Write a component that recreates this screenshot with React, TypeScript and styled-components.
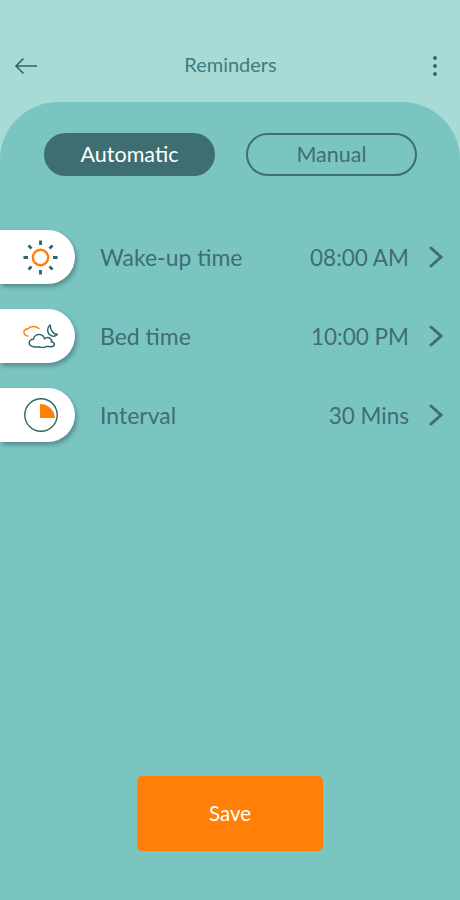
import React from "react";
import styled, { createGlobalStyle } from "styled-components";

const Global = createGlobalStyle`
  html, body { margin: 0; padding: 0; }
  body { font-family: Lato, "Open Sans", sans-serif; background: #a7dbd6; }
`;

const Page = styled.div`
  width: 460px;
  height: 900px;
  overflow: hidden;
  display: flex;
  flex-direction: column;
  background: #a7dbd6;
`;

const Header = styled.header`
  height: 102px;
  flex: none;
  padding: 0 22px 0 14px;
  box-sizing: border-box;
  display: grid;
  grid-template-columns: 40px 1fr 40px;
  align-items: start;
`;

const IconSlot = styled.div<{ $end?: boolean }>`
  height: 30px;
  margin-top: 51px;
  display: flex;
  align-items: center;
  justify-content: ${(p) => (p.$end ? "flex-end" : "flex-start")};
`;

const Title = styled.h1`
  margin: 51px 0 0 9px;
  font-size: 20px;
  line-height: 26px;
  font-weight: 400;
  text-align: center;
  color: #3f7c7f;
`;

const Panel = styled.main`
  flex: 1;
  background: #7bc5c1;
  border-radius: 58px 58px 0 0;
  display: flex;
  flex-direction: column;
  padding-top: 31px;
`;

const Toggle = styled.div`
  display: flex;
  justify-content: center;
  gap: 31px;
  padding-left: 1px;
`;

const Pill = styled.button<{ $active?: boolean }>`
  width: 171px;
  height: 43px;
  box-sizing: border-box;
  border-radius: 22px;
  border: 2px solid #3f6e72;
  background: ${(p) => (p.$active ? "#3f6e72" : "transparent")};
  color: ${(p) => (p.$active ? "#ffffff" : "#3f6e72")};
  font: 400 21.5px/1 Lato, "Open Sans", sans-serif;
  padding: 0;
`;

const List = styled.ul`
  list-style: none;
  margin: 54px 0 0;
  padding: 0;
  display: flex;
  flex-direction: column;
  gap: 25px;
`;

const Row = styled.li`
  height: 54px;
  display: flex;
  align-items: center;
  padding-right: 17px;
  color: #3f6e72;
  font-size: 23px;
`;

const IconTab = styled.div`
  width: 75px;
  height: 54px;
  flex: none;
  background: #fff;
  border-radius: 0 27px 27px 0;
  box-shadow: 2px 3px 4px rgba(50, 90, 95, 0.5);
  display: flex;
  align-items: center;
  justify-content: flex-end;
  padding-right: 17px;
  box-sizing: border-box;
`;

const Label = styled.span`
  margin-left: 25px;
  flex: 1;
`;

const Value = styled.span`
  margin-right: 20px;
  font-size: 22.5px;
`;

const Footer = styled.div`
  margin-top: auto;
  padding-bottom: 49px;
  display: flex;
  justify-content: center;
`;

const Save = styled.button`
  width: 186px;
  height: 75px;
  border: 0;
  border-radius: 5px;
  background: #ff7f08;
  color: #fff;
  font: 400 20.5px/1 Lato, "Open Sans", sans-serif;
`;

const Back = () => (
  <svg width="24" height="18" viewBox="0 0 24 18" fill="none" stroke="#2f6568" strokeWidth="1.6">
    <path d="M23 9H2M9.500 1.500 2 9l7.500 7.500" />
  </svg>
);

const More = () => (
  <svg width="6" height="22" viewBox="0 0 6 22" fill="#2f6568">
    <circle cx="3" cy="3" r="1.900" />
    <circle cx="3" cy="11" r="1.900" />
    <circle cx="3" cy="19" r="1.900" />
  </svg>
);

const Chevron = () => (
  <svg width="14" height="22" viewBox="0 0 14 22" fill="none" stroke="#3f6e72" strokeWidth="3" strokeLinecap="round">
    <path d="M2 2l10 9-10 9" />
  </svg>
);

const Sun = () => (
  <svg width="35" height="35" viewBox="0 0 35 35" fill="none">
    <circle cx="17.500" cy="17.500" r="7.700" stroke="#ff7f08" strokeWidth="2.400" />
    <path d="M17.500 .5v4.500M17.500 30v4.500M.5 17.500H5M30 17.500h4.500M5.500 5.500l3 3M26.500 26.500l3 3M29.500 5.500l-3 3M8.500 26.500l-3 3" stroke="#2f6568" strokeWidth="2.800" />
  </svg>
);

const Night = () => (
  <svg width="35" height="24" viewBox="0 0 35 24" fill="none" strokeLinecap="round" strokeLinejoin="round">
    <path d="M5 12C2 12 .5 9.500 1 7.500 1.500 5.500 3 5 5 4.800 7 2 12 1.500 16 4.500" stroke="#ff7f08" strokeWidth="1.400" />
    <path d="M11 22.800c-3 0-5-2-4.700-4.300.2-2 2-3.500 4.200-3.300.5-3 3-5 6-4.700 2.400.2 4.500 2 5 4.300 1.500-1.300 4-1.500 5.500-.5 1.500 1 2 2.500 1.300 3.700 2 0 3.300 1.300 3 2.700-.3 1.400-1.800 2.100-3.500 2-2-.1-3.300-.3-4.800-.2-1.500 1.300-5 1.500-6.500.3-1.500.3-3.500.3-5.500 0z" stroke="#2f6568" strokeWidth="1.500" />
    <path d="M27 1c-3.500 3.500-3 8 .5 10.300 2.500 1.400 5.500.8 7-1-3.500.6-7-3.500-7.500-9.300z" stroke="#2f6568" strokeWidth="1.500" />
  </svg>
);

const Quarter = () => (
  <svg width="34" height="34" viewBox="0 0 34 34" fill="none">
    <circle cx="17" cy="17" r="16.200" stroke="#2f6568" strokeWidth="1.400" />
    <path d="M16 6A15 15 0 0 1 31 20H16z" fill="#ff7f08" />
  </svg>
);

const rows = [
  { icon: <Sun />, label: "Wake-up time", value: "08:00 AM" },
  { icon: <Night />, label: "Bed time", value: "10:00 PM" },
  { icon: <Quarter />, label: "Interval", value: "30 Mins" },
];

export default function App() {
  return (
    <Page>
      <Global />
      <Header>
        <IconSlot><Back /></IconSlot>
        <Title>Reminders</Title>
        <IconSlot $end><More /></IconSlot>
      </Header>
      <Panel>
        <Toggle>
          <Pill $active>Automatic</Pill>
          <Pill>Manual</Pill>
        </Toggle>
        <List>
          {rows.map((r) => (
            <Row key={r.label}>
              <IconTab>{r.icon}</IconTab>
              <Label>{r.label}</Label>
              <Value>{r.value}</Value>
              <Chevron />
            </Row>
          ))}
        </List>
        <Footer>
          <Save>Save</Save>
        </Footer>
      </Panel>
    </Page>
  );
}
